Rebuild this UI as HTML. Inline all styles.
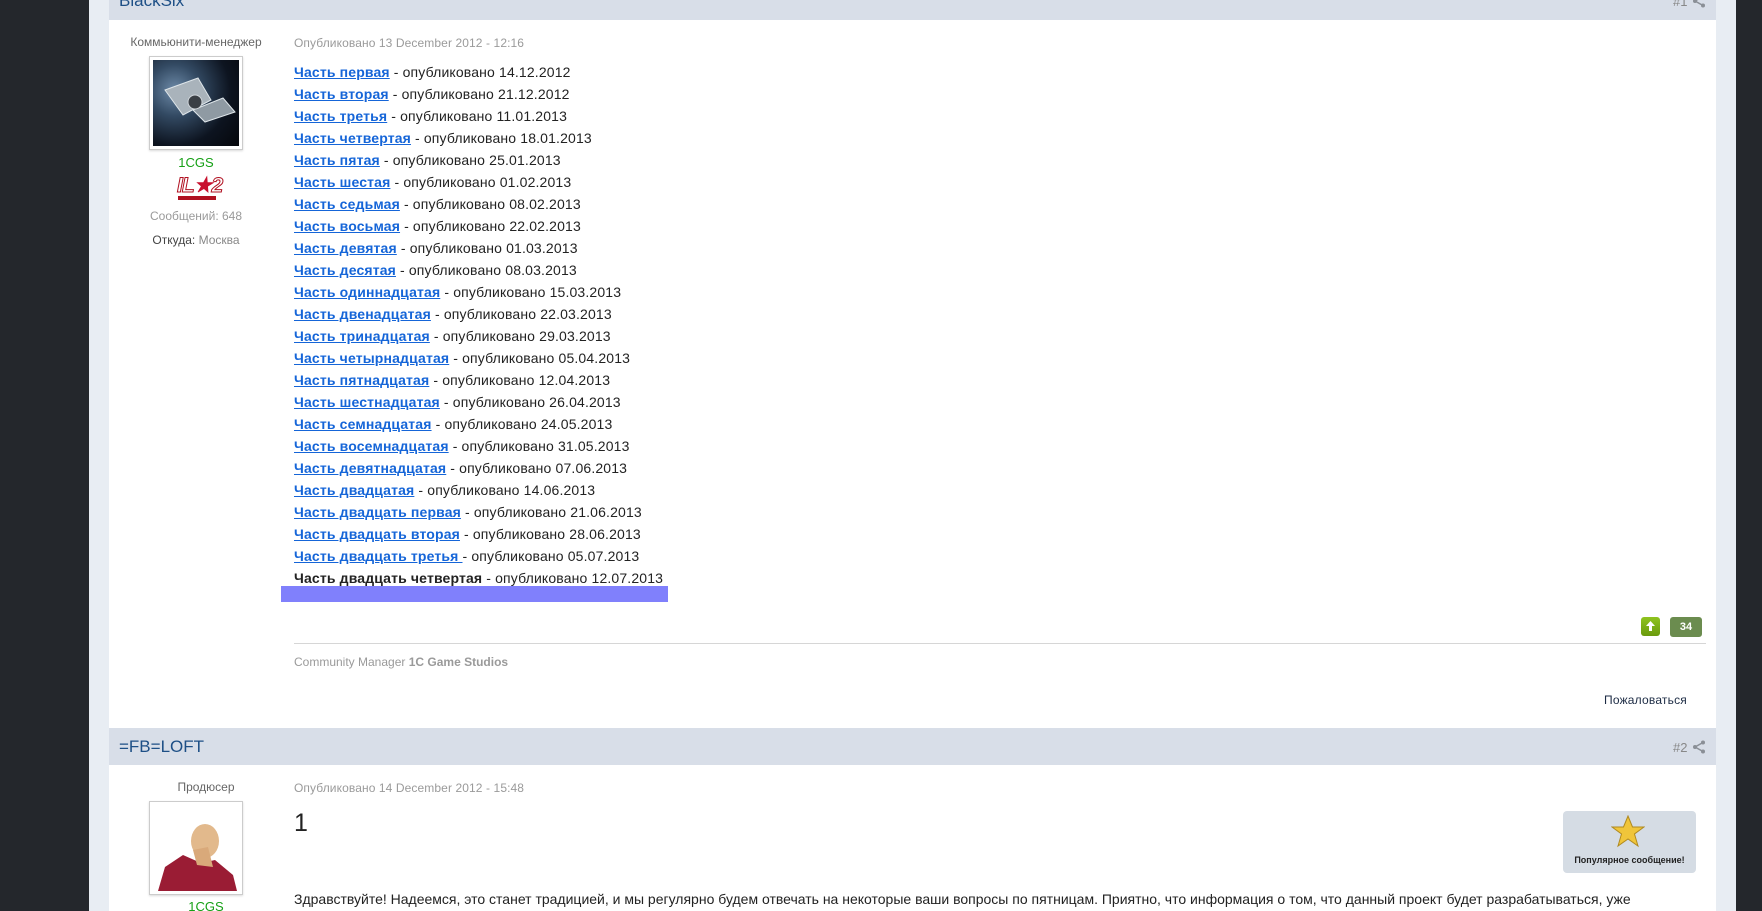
<!DOCTYPE html>
<html><head><meta charset="utf-8">
<style>
*{margin:0;padding:0;box-sizing:border-box}
html,body{width:1762px;height:911px;overflow:hidden}
body{background:#24272c;font-family:"Liberation Sans",Arial,sans-serif;position:relative}
.abs{position:absolute;white-space:nowrap}
.strip{position:absolute;top:0;height:911px;background:#e8edf3}
.panel{position:absolute;left:109px;top:0;width:1607px;height:911px;background:#fff}
.hdr{position:absolute;left:109px;width:1607px;background:#d8dee8}
.hname{font-size:17px;color:#1d4f86}
.role{font-size:12px;color:#666;text-align:center;width:200px}
.date{font-size:12px;color:#9a9a9a;letter-spacing:0.1px}
.lines{position:absolute;left:294px;top:61px;font-size:14px;color:#222;line-height:22px;letter-spacing:0.15px}
.lines a{color:#1565d8;font-weight:bold;text-decoration:underline}
.av{position:absolute;border:1px solid #ccc;box-shadow:0 1px 2px rgba(0,0,0,.15);padding:3px;background:#fff}
</style></head><body>
<div class="abs" style="left:0;top:0;width:89px;height:911px;background:#24272c"></div>
<div class="abs" style="left:1736px;top:0;width:26px;height:911px;background:#24272c"></div>
<div class="strip" style="left:89px;width:20px"></div>
<div class="strip" style="left:1716px;width:20px"></div>
<div class="panel"></div>

<div class="hdr" style="top:0;height:20px"></div>
<div class="abs hname" style="left:119px;top:-9px">BlackSix</div>
<div class="abs" style="left:1673px;top:-6px;font-size:13px;color:#888">#1</div>
<svg class="abs" style="left:1692px;top:-6px" width="14" height="14" viewBox="0 0 14 14"><circle cx="11" cy="2.5" r="2" fill="#8a8f96"/><circle cx="11" cy="11.5" r="2" fill="#8a8f96"/><circle cx="3" cy="7" r="2" fill="#8a8f96"/><path d="M11 2.5L3 7L11 11.5" stroke="#8a8f96" stroke-width="1.5" fill="none"/></svg>

<div class="abs role" style="left:96px;top:35px">Коммьюнити-менеджер</div>
<div class="av" style="left:149px;top:56px;width:94px;height:94px"><div style="width:86px;height:86px;background:radial-gradient(circle at 25% 35%,#6d8aa8 0,#334a63 30%,#0d1420 65%,#05070b 100%);position:relative">
<svg width="86" height="86" viewBox="0 0 86 86" style="position:absolute;left:0;top:0"><path d="M12 30L45 18L58 40L30 55Z" fill="#a9b3bb" stroke="#dfe6ea"/><path d="M40 50L70 38L82 52L52 62Z" fill="#8f9aa3" stroke="#dfe6ea"/><circle cx="42" cy="42" r="7" fill="#3a3f45" stroke="#cfd5da"/></svg></div></div>
<div class="abs" style="left:96px;top:155px;width:200px;text-align:center;font-size:13px;color:#16a016">1CGS</div>
<div class="abs" style="left:177px;top:175px;width:40px;height:27px">
<div style="font:italic bold 21px 'Liberation Sans',sans-serif;color:#fff;-webkit-text-stroke:1px #b01020;line-height:21px;letter-spacing:-1px">IL<span style="color:#c8102e;-webkit-text-stroke:0">★</span>2</div>
<div style="position:absolute;left:1px;top:21px;width:38px;height:4px;background:#b01020"></div></div>
<div class="abs" style="left:96px;top:209px;width:200px;text-align:center;font-size:12px;color:#9a9a9a">Сообщений: 648</div>
<div class="abs" style="left:96px;top:233px;width:200px;text-align:center;font-size:12px;color:#444">Откуда: <span style="color:#888">Москва</span></div>

<div class="abs date" style="left:294px;top:36px">Опубликовано 13 December 2012 - 12:16</div>
<div class="lines abs">
<a>Часть первая</a> - опубликовано 14.12.2012<br>
<a>Часть вторая</a> - опубликовано 21.12.2012<br>
<a>Часть третья</a> - опубликовано 11.01.2013<br>
<a>Часть четвертая</a> - опубликовано 18.01.2013<br>
<a>Часть пятая</a> - опубликовано 25.01.2013<br>
<a>Часть шестая</a> - опубликовано 01.02.2013<br>
<a>Часть седьмая</a> - опубликовано 08.02.2013<br>
<a>Часть восьмая</a> - опубликовано 22.02.2013<br>
<a>Часть девятая</a> - опубликовано 01.03.2013<br>
<a>Часть десятая</a> - опубликовано 08.03.2013<br>
<a>Часть одиннадцатая</a> - опубликовано 15.03.2013<br>
<a>Часть двенадцатая</a> - опубликовано 22.03.2013<br>
<a>Часть тринадцатая</a> - опубликовано 29.03.2013<br>
<a>Часть четырнадцатая</a> - опубликовано 05.04.2013<br>
<a>Часть пятнадцатая</a> - опубликовано 12.04.2013<br>
<a>Часть шестнадцатая</a> - опубликовано 26.04.2013<br>
<a>Часть семнадцатая</a> - опубликовано 24.05.2013<br>
<a>Часть восемнадцатая</a> - опубликовано 31.05.2013<br>
<a>Часть девятнадцатая</a> - опубликовано 07.06.2013<br>
<a>Часть двадцатая</a> - опубликовано 14.06.2013<br>
<a>Часть двадцать первая</a> - опубликовано 21.06.2013<br>
<a>Часть двадцать вторая</a> - опубликовано 28.06.2013<br>
<a>Часть двадцать третья </a> - опубликовано 05.07.2013<br>
<b>Часть двадцать четвертая</b> - опубликовано 12.07.2013
</div>
<div class="abs" style="left:281px;top:586px;width:387px;height:16px;background:#8080fc"></div>

<div class="abs" style="left:1641px;top:617px;width:19px;height:19px;border-radius:3px;background:linear-gradient(#8fc31f,#6a9a0e)"><svg width="19" height="19" viewBox="0 0 19 19"><path d="M9.5 4L5 9H8V14H11V9H14Z" fill="#fff"/></svg></div>
<div class="abs" style="left:1670px;top:617px;width:32px;height:20px;border-radius:3px;background:#6b8c4f;color:#fff;font-size:11px;font-weight:bold;text-align:center;line-height:20px">34</div>
<div class="abs" style="left:294px;top:643px;width:1412px;height:1px;background:#d6d6d6"></div>
<div class="abs" style="left:294px;top:655px;font-size:12px;color:#9a9a9a">Community Manager <b>1C Game Studios</b></div>
<div class="abs" style="left:1604px;top:693px;font-size:12px;color:#1c2b44;letter-spacing:0.2px">Пожаловаться</div>

<div class="hdr" style="top:728px;height:37px"></div>
<div class="abs hname" style="left:119px;top:737px">=FB=LOFT</div>
<div class="abs" style="left:1673px;top:740px;font-size:13px;color:#888">#2</div>
<svg class="abs" style="left:1692px;top:740px" width="14" height="14" viewBox="0 0 14 14"><circle cx="11" cy="2.5" r="2" fill="#8a8f96"/><circle cx="11" cy="11.5" r="2" fill="#8a8f96"/><circle cx="3" cy="7" r="2" fill="#8a8f96"/><path d="M11 2.5L3 7L11 11.5" stroke="#8a8f96" stroke-width="1.5" fill="none"/></svg>

<div class="abs role" style="left:106px;top:780px">Продюсер</div>
<div class="av" style="left:149px;top:801px;width:94px;height:94px"><div style="width:86px;height:86px;background:#fff;position:relative">
<svg width="86" height="86" viewBox="0 0 86 86" style="position:absolute;left:0;top:0"><path d="M5 86L12 62L30 50L48 58L62 55L80 70L84 86Z" fill="#9a1c34"/><ellipse cx="52" cy="36" rx="14" ry="17" fill="#e2b98c"/><path d="M40 45L55 42L60 62L44 60Z" fill="#d9a97a"/></svg></div></div>
<div class="abs" style="left:106px;top:899px;width:200px;text-align:center;font-size:13px;color:#16a016">1CGS</div>

<div class="abs date" style="left:294px;top:781px">Опубликовано 14 December 2012 - 15:48</div>
<div class="abs" style="left:294px;top:809px;font-size:25px;color:#222">1</div>
<div class="abs" style="left:1563px;top:811px;width:133px;height:62px;border-radius:4px;background:#d5dce4"></div>
<svg class="abs" style="left:1611px;top:815px" width="34" height="33" viewBox="0 0 34 33"><path d="M17 1L21.5 12H33L23.5 19L27 31L17 24L7 31L10.5 19L1 12H12.5Z" fill="#f0c53a" stroke="#b08a20" stroke-width="1"/></svg>
<div class="abs" style="left:1563px;top:855px;width:133px;text-align:center;font-size:9px;font-weight:bold;color:#222">Популярное сообщение!</div>
<div class="abs" style="left:294px;top:891px;font-size:14px;color:#222">Здравствуйте! Надеемся, это станет традицией, и мы регулярно будем отвечать на некоторые ваши вопросы по пятницам. Приятно, что информация о том, что данный проект будет разрабатываться, уже</div>
</body></html>
